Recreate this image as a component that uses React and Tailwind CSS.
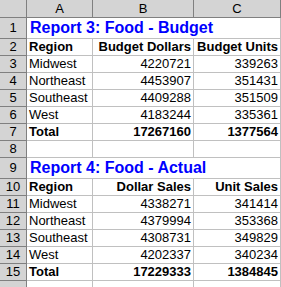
import React from 'react';

const hdr = 'bg-[#d4d4d4] border-r border-b border-[#808080] text-center';
const cell = 'border-r border-b border-[#c0c0c0] px-[2px] leading-[16px] h-[17px] whitespace-nowrap overflow-hidden';

const rows = [
  { n: 1, title: 'Report 3: Food - Budget' },
  { n: 2, cells: ['Region', 'Budget Dollars', 'Budget Units'], bold: true },
  { n: 3, cells: ['Midwest', '4220721', '339263'] },
  { n: 4, cells: ['Northeast', '4453907', '351431'] },
  { n: 5, cells: ['Southeast', '4409288', '351509'] },
  { n: 6, cells: ['West', '4183244', '335361'] },
  { n: 7, cells: ['Total', '17267160', '1377564'], bold: true },
  { n: 8, cells: ['', '', ''] },
  { n: 9, title: 'Report 4: Food - Actual' },
  { n: 10, cells: ['Region', 'Dollar Sales', 'Unit Sales'], bold: true },
  { n: 11, cells: ['Midwest', '4338271', '341414'] },
  { n: 12, cells: ['Northeast', '4379994', '353368'] },
  { n: 13, cells: ['Southeast', '4308731', '349829'] },
  { n: 14, cells: ['West', '4202337', '340234'] },
  { n: 15, cells: ['Total', '17229333', '1384845'], bold: true },
  // partly visible last row, label hidden below the window edge
  { n: '', cells: ['', '', ''] },
];

const App = () => {
  return (
    <div className="w-[281px] h-[287px] overflow-hidden bg-white font-['Liberation_Sans',Arial,sans-serif] text-[13px] text-black">
      <div className="grid grid-cols-[27px_66px_101px_87px]">
        <div className={`${hdr} h-[18px]`} />
        {['A', 'B', 'C'].map((c) => (
          <div key={c} className={`${hdr} h-[18px] leading-[17px]`}>{c}</div>
        ))}

        {rows.map((row, idx) =>
          row.title ? (
            <React.Fragment key={idx}>
              <div className={`${hdr} h-[21px] leading-[20px]`}>{row.n}</div>
              <div className="col-span-3 h-[21px] border-r border-b border-[#c0c0c0] pl-[3px] text-[16px] font-bold leading-[20px] text-[#0000ff] whitespace-nowrap">
                {row.title}
              </div>
            </React.Fragment>
          ) : (
            <React.Fragment key={idx}>
              <div className={`${hdr} h-[17px] leading-[16px]`}>{row.n}</div>
              {row.cells.map((v, i) => (
                <div
                  key={i}
                  className={`${cell} ${i > 0 ? 'text-right' : 'text-left'} ${row.bold ? 'font-bold' : ''}`}
                >
                  {v}
                </div>
              ))}
            </React.Fragment>
          )
        )}
      </div>
    </div>
  );
};

export default App;
